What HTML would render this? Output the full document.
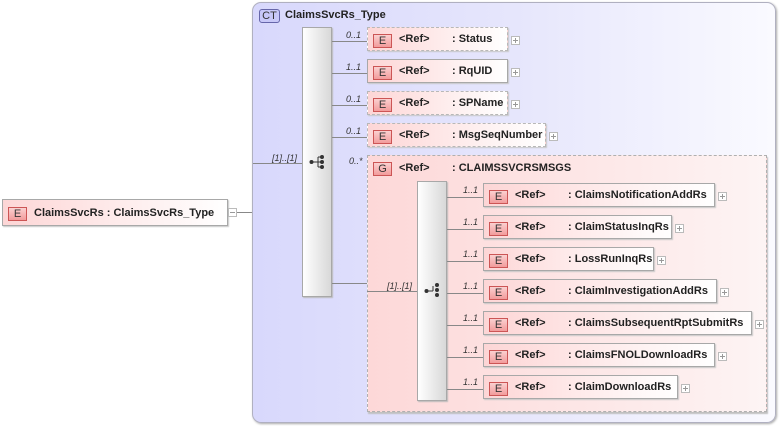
<!DOCTYPE html>
<html><head><meta charset="utf-8"><style>
*{margin:0;padding:0;box-sizing:border-box}
body{width:780px;height:426px;background:#fff;position:relative;overflow:hidden;font-family:"Liberation Sans",sans-serif;font-size:11px;color:#222}
.a{position:absolute}
.ct{left:252px;top:2px;width:524px;height:421px;border:1px solid #b0b0c0;border-radius:9px;background:linear-gradient(to right,#d8d8fc 0%,#e6e6fc 50%,#fafaff 100%);box-shadow:1px 1px 2px #aaa}
.badge{position:absolute;height:14px;font-size:11px;text-align:center;line-height:13px;color:#333}
.ctb{left:6px;top:6px;width:21px;border:1px solid #66a;border-radius:3px;background:#c8c8f8}
.el{position:absolute;height:24px;border:1px solid #a8a8a8;background:linear-gradient(to right,#fdd6d6,#fff);box-shadow:1px 1px 1px #c8c8c8;font-weight:bold;white-space:nowrap}
.el.o{border:1px dashed #b8b8b8}
.eb{left:5px;top:6px;width:19px;border:1px solid #c55;background:linear-gradient(#fbd0d0,#f29c9c);font-weight:normal}
.el .r{position:absolute;left:31px;top:5px}
.el .n{position:absolute;left:84px;top:5px}
.pl{position:absolute;width:9px;height:9px;border:1px solid #bbb;background:#fff}
.pl:before{content:"";position:absolute;left:1px;top:3px;width:5px;height:1px;background:#999}
.pl.p:after{content:"";position:absolute;left:3px;top:1px;width:1px;height:5px;background:#999}
.seq{position:absolute;width:30px;border:1px solid #a8a8a8;background:linear-gradient(to right,#fff,#d8d8d8);box-shadow:1px 1px 1px #bbb}
.h{position:absolute;height:1px;background:#888}
.c{position:absolute;font-size:9px;font-style:italic;color:#333}
.grp{left:367px;top:155px;width:400px;height:257px;border:1px dashed #b0b0b0;background:linear-gradient(to right,#fdd8d8,#fde8e8 60%,#fdf4f4);box-shadow:1px 2px 1px #c0c0c0}
</style></head><body>
<!-- root element -->
<div class="el" style="left:2px;top:199px;width:226px;height:27px"><div class="badge eb" style="top:7px">E</div><span class="a" style="left:31px;top:7px">ClaimsSvcRs&nbsp;: ClaimsSvcRs_Type</span></div>
<div class="pl" style="left:228px;top:208px"></div>
<div class="h" style="left:237px;top:212px;width:16px"></div>

<div class="a ct"><div class="badge ctb">CT</div><span class="a" style="left:32px;top:6px;font-weight:bold">ClaimsSvcRs_Type</span></div>

<div class="h" style="left:253px;top:163px;width:49px"></div>
<span class="c" style="left:272px;top:153px">[1]..[1]</span>
<div class="seq" style="left:302px;top:27px;height:270px"></div>
<svg class="a" style="left:309px;top:154px" width="18" height="16"><circle cx="2.5" cy="8" r="2" fill="#333"/><path d="M4 8H9M9 3V13M9 3H12M9 8H12M9 13H12" stroke="#333" fill="none"/><circle cx="13" cy="3" r="2" fill="#333"/><circle cx="13" cy="8" r="2" fill="#333"/><circle cx="13" cy="13" r="2" fill="#333"/></svg>

<div class="h" style="left:332px;top:41px;width:35px"></div><span class="c" style="left:346px;top:30px">0..1</span>
<div class="el o" style="left:367px;top:27px;width:141px"><div class="badge eb">E</div><span class="r">&lt;Ref&gt;</span><span class="n">: Status</span></div><div class="pl p" style="left:511px;top:36px"></div>

<div class="h" style="left:332px;top:73px;width:35px"></div><span class="c" style="left:346px;top:62px">1..1</span>
<div class="el" style="left:367px;top:59px;width:141px"><div class="badge eb">E</div><span class="r">&lt;Ref&gt;</span><span class="n">: RqUID</span></div><div class="pl p" style="left:511px;top:68px"></div>

<div class="h" style="left:332px;top:105px;width:35px"></div><span class="c" style="left:346px;top:94px">0..1</span>
<div class="el o" style="left:367px;top:91px;width:141px"><div class="badge eb">E</div><span class="r">&lt;Ref&gt;</span><span class="n">: SPName</span></div><div class="pl p" style="left:511px;top:100px"></div>

<div class="h" style="left:332px;top:137px;width:35px"></div><span class="c" style="left:346px;top:126px">0..1</span>
<div class="el o" style="left:367px;top:123px;width:179px"><div class="badge eb">E</div><span class="r">&lt;Ref&gt;</span><span class="n">: MsgSeqNumber</span></div><div class="pl p" style="left:549px;top:132px"></div>

<span class="c" style="left:349px;top:156px">0..*</span>
<div class="a grp"></div>
<div class="badge eb" style="left:373px;top:162px">G</div>
<span class="a" style="left:399px;top:162px;font-weight:bold">&lt;Ref&gt;</span>
<span class="a" style="left:452px;top:162px;font-weight:bold">: CLAIMSSVCRSMSGS</span>
<div class="h" style="left:332px;top:283px;width:35px"></div>
<div class="h" style="left:367px;top:291px;width:50px"></div>
<span class="c" style="left:387px;top:281px">[1]..[1]</span>
<div class="seq" style="left:417px;top:181px;height:220px"></div>
<svg class="a" style="left:424px;top:282px" width="18" height="16"><circle cx="2.5" cy="9" r="2" fill="#333"/><path d="M4 9H9M9 4V9" stroke="#333" fill="none"/><circle cx="13" cy="3" r="2" fill="#333"/><circle cx="13" cy="8" r="2" fill="#333"/><circle cx="13" cy="13" r="2" fill="#333"/></svg>

<div class="h" style="left:447px;top:197px;width:36px"></div><span class="c" style="left:463px;top:185px">1..1</span>
<div class="el" style="left:483px;top:183px;width:232px"><div class="badge eb">E</div><span class="r">&lt;Ref&gt;</span><span class="n">: ClaimsNotificationAddRs</span></div><div class="pl p" style="left:718px;top:192px"></div>

<div class="h" style="left:447px;top:229px;width:36px"></div><span class="c" style="left:463px;top:217px">1..1</span>
<div class="el" style="left:483px;top:215px;width:189px"><div class="badge eb">E</div><span class="r">&lt;Ref&gt;</span><span class="n">: ClaimStatusInqRs</span></div><div class="pl p" style="left:675px;top:224px"></div>

<div class="h" style="left:447px;top:261px;width:36px"></div><span class="c" style="left:463px;top:249px">1..1</span>
<div class="el" style="left:483px;top:247px;width:171px"><div class="badge eb">E</div><span class="r">&lt;Ref&gt;</span><span class="n">: LossRunInqRs</span></div><div class="pl p" style="left:657px;top:256px"></div>

<div class="h" style="left:447px;top:293px;width:36px"></div><span class="c" style="left:463px;top:281px">1..1</span>
<div class="el" style="left:483px;top:279px;width:234px"><div class="badge eb">E</div><span class="r">&lt;Ref&gt;</span><span class="n">: ClaimInvestigationAddRs</span></div><div class="pl p" style="left:720px;top:288px"></div>

<div class="h" style="left:447px;top:325px;width:36px"></div><span class="c" style="left:463px;top:313px">1..1</span>
<div class="el" style="left:483px;top:311px;width:269px"><div class="badge eb">E</div><span class="r">&lt;Ref&gt;</span><span class="n">: ClaimsSubsequentRptSubmitRs</span></div><div class="pl p" style="left:755px;top:320px"></div>

<div class="h" style="left:447px;top:357px;width:36px"></div><span class="c" style="left:463px;top:345px">1..1</span>
<div class="el" style="left:483px;top:343px;width:232px"><div class="badge eb">E</div><span class="r">&lt;Ref&gt;</span><span class="n">: ClaimsFNOLDownloadRs</span></div><div class="pl p" style="left:718px;top:352px"></div>

<div class="h" style="left:447px;top:389px;width:36px"></div><span class="c" style="left:463px;top:377px">1..1</span>
<div class="el" style="left:483px;top:375px;width:195px"><div class="badge eb">E</div><span class="r">&lt;Ref&gt;</span><span class="n">: ClaimDownloadRs</span></div><div class="pl p" style="left:681px;top:384px"></div>
</body></html>
